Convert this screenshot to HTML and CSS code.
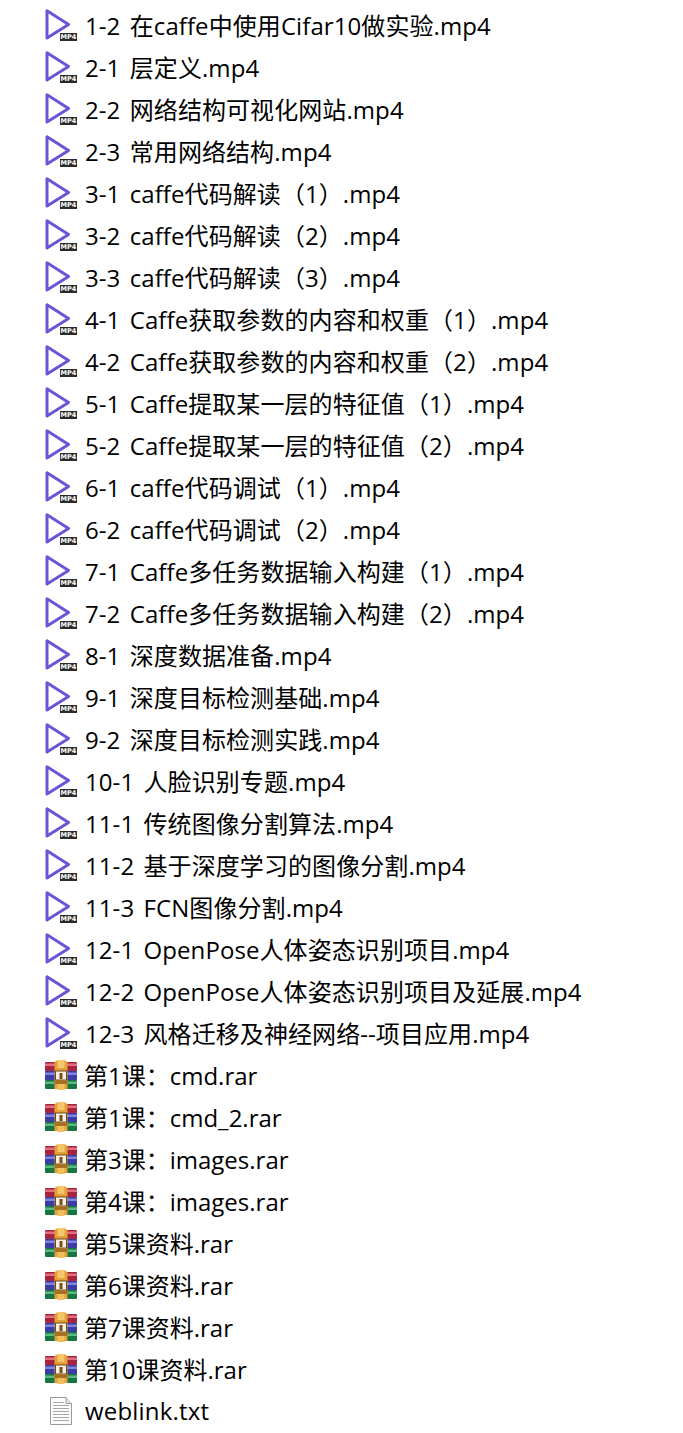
FILE: index.html
```html
<!DOCTYPE html>
<html lang="zh">
<head>
<meta charset="utf-8">
<title>Files</title>
<link rel="stylesheet" href="styles.css">
</head>
<body>
<svg class="defs" width="0" height="0" aria-hidden="true">
  <symbol id="mp4" viewBox="0 0 34 34">
    <path d="M3 2.8 L3 30 L24.6 16.4 Z" fill="none" stroke="#6a55d8" stroke-width="3" stroke-linejoin="round"/>
  </symbol>
  <symbol id="rar" viewBox="0 0 34 34">
    <rect x="1" y="4" width="32" height="9" rx="1" fill="#a8243c"/>
    <rect x="1" y="13" width="32" height="9" fill="#3a3da6"/>
    <rect x="1" y="22" width="32" height="9" rx="1" fill="#17763f"/>
    <rect x="1" y="5.5" width="32" height="2.5" fill="#e06f80"/>
    <rect x="1" y="14.5" width="32" height="2.5" fill="#8083e0"/>
    <rect x="1" y="23.5" width="32" height="2.5" fill="#5ab880"/>
    <path d="M10.5 4 L14 2 H20 L23.5 4 V31 H10.5 Z" fill="#e2a037"/>
    <rect x="13.5" y="2" width="7" height="8" fill="#f4c868"/>
    <rect x="11.5" y="13" width="11" height="9" fill="#f8f1e4" stroke="#6b4a1c"/>
    <rect x="15.5" y="15" width="3" height="6" fill="#7a4d18"/>
    <rect x="10.5" y="23" width="13" height="3" fill="#a86f22"/>
    <rect x="13.5" y="26" width="7" height="6" fill="#f0c060"/>
  </symbol>
  <symbol id="txt" viewBox="0 0 34 34">
    <path d="M6.5 3.5 H22 L27.5 9.5 V30.5 H6.5 Z" fill="#fbfbfb" stroke="#9a9a9a"/>
    <path d="M22 3.5 V9.5 H27.5" fill="#e6e6e6" stroke="#9a9a9a"/>
    <path d="M9 8.5H20M9 11.5H25M9 14.5H25M9 17.5H25M9 20.5H25M9 23.5H25M9 26.5H25" stroke="#a8a8a8" fill="none"/>
  </symbol>
</svg>
<ul class="files">
  <li class="file video"><span class="thumb"><svg class="icon"><use href="#mp4"/></svg><span class="badge">MP4</span></span><span class="name">1-2 在caffe中使用Cifar10做实验.mp4</span></li>
  <li class="file video"><span class="thumb"><svg class="icon"><use href="#mp4"/></svg><span class="badge">MP4</span></span><span class="name">2-1 层定义.mp4</span></li>
  <li class="file video"><span class="thumb"><svg class="icon"><use href="#mp4"/></svg><span class="badge">MP4</span></span><span class="name">2-2 网络结构可视化网站.mp4</span></li>
  <li class="file video"><span class="thumb"><svg class="icon"><use href="#mp4"/></svg><span class="badge">MP4</span></span><span class="name">2-3 常用网络结构.mp4</span></li>
  <li class="file video"><span class="thumb"><svg class="icon"><use href="#mp4"/></svg><span class="badge">MP4</span></span><span class="name">3-1 caffe代码解读（1）.mp4</span></li>
  <li class="file video"><span class="thumb"><svg class="icon"><use href="#mp4"/></svg><span class="badge">MP4</span></span><span class="name">3-2 caffe代码解读（2）.mp4</span></li>
  <li class="file video"><span class="thumb"><svg class="icon"><use href="#mp4"/></svg><span class="badge">MP4</span></span><span class="name">3-3 caffe代码解读（3）.mp4</span></li>
  <li class="file video"><span class="thumb"><svg class="icon"><use href="#mp4"/></svg><span class="badge">MP4</span></span><span class="name">4-1 Caffe获取参数的内容和权重（1）.mp4</span></li>
  <li class="file video"><span class="thumb"><svg class="icon"><use href="#mp4"/></svg><span class="badge">MP4</span></span><span class="name">4-2 Caffe获取参数的内容和权重（2）.mp4</span></li>
  <li class="file video"><span class="thumb"><svg class="icon"><use href="#mp4"/></svg><span class="badge">MP4</span></span><span class="name">5-1 Caffe提取某一层的特征值（1）.mp4</span></li>
  <li class="file video"><span class="thumb"><svg class="icon"><use href="#mp4"/></svg><span class="badge">MP4</span></span><span class="name">5-2 Caffe提取某一层的特征值（2）.mp4</span></li>
  <li class="file video"><span class="thumb"><svg class="icon"><use href="#mp4"/></svg><span class="badge">MP4</span></span><span class="name">6-1 caffe代码调试（1）.mp4</span></li>
  <li class="file video"><span class="thumb"><svg class="icon"><use href="#mp4"/></svg><span class="badge">MP4</span></span><span class="name">6-2 caffe代码调试（2）.mp4</span></li>
  <li class="file video"><span class="thumb"><svg class="icon"><use href="#mp4"/></svg><span class="badge">MP4</span></span><span class="name">7-1 Caffe多任务数据输入构建（1）.mp4</span></li>
  <li class="file video"><span class="thumb"><svg class="icon"><use href="#mp4"/></svg><span class="badge">MP4</span></span><span class="name">7-2 Caffe多任务数据输入构建（2）.mp4</span></li>
  <li class="file video"><span class="thumb"><svg class="icon"><use href="#mp4"/></svg><span class="badge">MP4</span></span><span class="name">8-1 深度数据准备.mp4</span></li>
  <li class="file video"><span class="thumb"><svg class="icon"><use href="#mp4"/></svg><span class="badge">MP4</span></span><span class="name">9-1 深度目标检测基础.mp4</span></li>
  <li class="file video"><span class="thumb"><svg class="icon"><use href="#mp4"/></svg><span class="badge">MP4</span></span><span class="name">9-2 深度目标检测实践.mp4</span></li>
  <li class="file video"><span class="thumb"><svg class="icon"><use href="#mp4"/></svg><span class="badge">MP4</span></span><span class="name">10-1 人脸识别专题.mp4</span></li>
  <li class="file video"><span class="thumb"><svg class="icon"><use href="#mp4"/></svg><span class="badge">MP4</span></span><span class="name">11-1 传统图像分割算法.mp4</span></li>
  <li class="file video"><span class="thumb"><svg class="icon"><use href="#mp4"/></svg><span class="badge">MP4</span></span><span class="name">11-2 基于深度学习的图像分割.mp4</span></li>
  <li class="file video"><span class="thumb"><svg class="icon"><use href="#mp4"/></svg><span class="badge">MP4</span></span><span class="name">11-3 FCN图像分割.mp4</span></li>
  <li class="file video"><span class="thumb"><svg class="icon"><use href="#mp4"/></svg><span class="badge">MP4</span></span><span class="name">12-1 OpenPose人体姿态识别项目.mp4</span></li>
  <li class="file video"><span class="thumb"><svg class="icon"><use href="#mp4"/></svg><span class="badge">MP4</span></span><span class="name">12-2 OpenPose人体姿态识别项目及延展.mp4</span></li>
  <li class="file video"><span class="thumb"><svg class="icon"><use href="#mp4"/></svg><span class="badge">MP4</span></span><span class="name">12-3 风格迁移及神经网络--项目应用.mp4</span></li>
  <li class="file archive"><span class="thumb"><svg class="icon"><use href="#rar"/></svg></span><span class="name">第1课：cmd.rar</span></li>
  <li class="file archive"><span class="thumb"><svg class="icon"><use href="#rar"/></svg></span><span class="name">第1课：cmd_2.rar</span></li>
  <li class="file archive"><span class="thumb"><svg class="icon"><use href="#rar"/></svg></span><span class="name">第3课：images.rar</span></li>
  <li class="file archive"><span class="thumb"><svg class="icon"><use href="#rar"/></svg></span><span class="name">第4课：images.rar</span></li>
  <li class="file archive"><span class="thumb"><svg class="icon"><use href="#rar"/></svg></span><span class="name">第5课资料.rar</span></li>
  <li class="file archive"><span class="thumb"><svg class="icon"><use href="#rar"/></svg></span><span class="name">第6课资料.rar</span></li>
  <li class="file archive"><span class="thumb"><svg class="icon"><use href="#rar"/></svg></span><span class="name">第7课资料.rar</span></li>
  <li class="file archive"><span class="thumb"><svg class="icon"><use href="#rar"/></svg></span><span class="name">第10课资料.rar</span></li>
  <li class="file text"><span class="thumb"><svg class="icon"><use href="#txt"/></svg></span><span class="name">weblink.txt</span></li>
</ul>
</body>
</html>
```
FILE: styles.css
```css
html, body {
  margin: 0;
  background: #fff;
}
.defs {
  position: absolute;
}
.files {
  list-style: none;
  margin: 0;
  padding: 6px 0 0 44px;
  font-family: "Open Sans", "Noto Sans CJK SC", sans-serif;
  font-size: 24px;
  color: #000;
}
.file {
  display: flex;
  align-items: center;
  gap: 7px;
  height: 42px;
  white-space: nowrap;
}
.video {
  letter-spacing: 0.08px;
}
.archive {
  gap: 6px;
}
.text {
  letter-spacing: 0.2px;
}
.thumb {
  position: relative;
  display: block;
  width: 34px;
  height: 34px;
  margin-bottom: 4px;
  flex: none;
}
.icon {
  display: block;
  width: 34px;
  height: 34px;
}
.badge {
  position: absolute;
  left: 16px;
  top: 25px;
  width: 17px;
  height: 8px;
  background: #2b2b2b;
  color: #fff;
  font-family: "DejaVu Sans", sans-serif;
  font-size: 6.5px;
  font-weight: 700;
  letter-spacing: 0;
  line-height: 8px;
  text-align: center;
}
.name {
  margin-bottom: 6px;
  word-spacing: 3px;
}
```
